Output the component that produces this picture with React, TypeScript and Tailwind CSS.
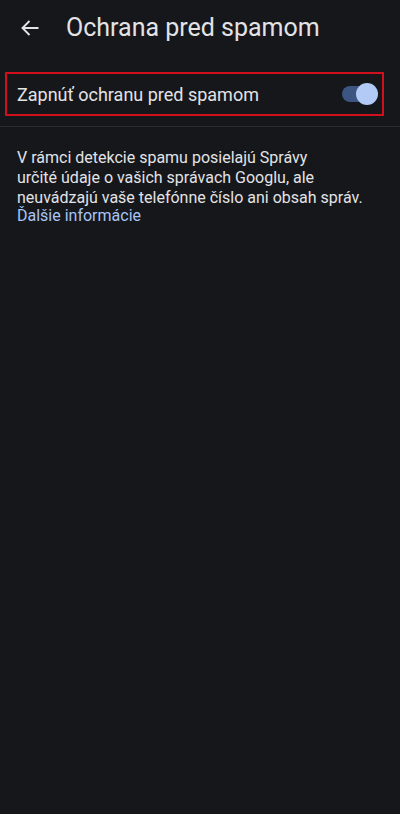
import React from "react";

export default function App() {
  return (
    <div
      className="w-[400px] h-[814px] bg-[#15171b] text-[#e3e3e6] overflow-hidden"
      style={{ fontFamily: "Roboto, 'Noto Sans', sans-serif" }}
    >
      <div className="flex items-center h-[56px]">
        <div className="w-[62px] flex justify-center pr-[2px]">
          <svg width="20" height="20" viewBox="0 0 20 20" fill="none">
            <path d="M18.5 10H2.5M9.5 3L2.5 10l7 7" stroke="#e3e3e6" strokeWidth="1.9" />
          </svg>
        </div>
        <div className="text-[25px] ml-[4px]">Ochrana pred spamom</div>
      </div>
      <div className="pl-[5px] pr-[16px] pt-[16px]">
        <div className="h-[44px] border-2 border-[#d0101c] flex items-center justify-between pl-[10px] pr-[7px]">
          <span className="text-[18px]">Zapnúť ochranu pred spamom</span>
          <div className="relative w-[33px] h-[16px] rounded-full bg-[#3d5583]">
            <div className="absolute right-[-3px] top-[-3px] w-[22px] h-[22px] rounded-full bg-[#b4caf6]" />
          </div>
        </div>
      </div>
      <div className="h-px bg-[#2a2c31] mt-[10px]" />
      <div className="px-[17px] pt-[21px] text-[16px] leading-[20px] text-[#e3e3e6]">
        <p>
          V rámci detekcie spamu posielajú Správy
          <br />
          určité údaje o vašich správach Googlu, ale
          <br />
          neuvádzajú vaše telefónne číslo ani obsah správ.
        </p>
        <p className="text-[#a8c4f5] -mt-[2px]">Ďalšie informácie</p>
      </div>
    </div>
  );
}
